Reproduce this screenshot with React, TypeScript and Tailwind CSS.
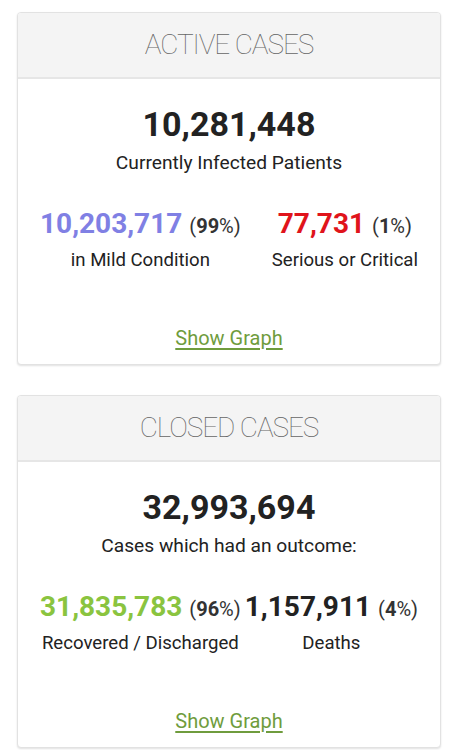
import React from "react";

type Side = { value: string; pct: string; label: string; color: string };

function Card({
  title,
  total,
  subtitle,
  left,
  right,
}: {
  title: string;
  total: string;
  subtitle: string;
  left: Side;
  right: Side;
}) {
  const side = (s: Side) => (
    <div className="flex flex-col items-center">
      <div className="flex items-baseline whitespace-nowrap">
        <span className="text-[28px] leading-[32px] font-bold" style={{ color: s.color }}>
          {s.value}
        </span>
        <span className="ml-[7px] text-[20px] leading-[32px] text-[#333]">
          (<span className="font-bold">{s.pct}</span>%)
        </span>
      </div>
      <div className="mt-[6px] text-[18.6px] leading-[24px] text-[#222]">{s.label}</div>
    </div>
  );
  return (
    <div className="ml-[17px] w-[424px] rounded-[4px] border border-[#e2e2e2] bg-white shadow-[0_1px_2px_rgba(0,0,0,0.12)] overflow-hidden">
      <div className="h-[66px] flex items-center justify-center bg-[#f4f4f4] border-b-2 border-[#e6e6e6]">
        <span className="text-[28px] font-thin text-[#666] tracking-[-1.1px]">{title}</span>
      </div>
      <div className="flex flex-col items-center pt-[25px] pb-[14px]">
        <div className="text-[34px] leading-[40px] font-bold text-[#222]">{total}</div>
        <div className="mt-[7px] text-[19.2px] leading-[24px] text-[#222]">{subtitle}</div>
        <div className="mt-[33px] w-full flex justify-between px-[22px]">
          {side(left)}
          {side(right)}
        </div>
        <div className="mt-[54px] text-[20px] leading-[24px] text-[#6f9c3d] underline underline-offset-[3px]">
          Show Graph
        </div>
      </div>
    </div>
  );
}

export default function App() {
  return (
    <div
      className="w-[453px] h-[750px] bg-white pt-[12px] flex flex-col gap-[30px]"
      style={{ fontFamily: "Roboto, 'Liberation Sans', sans-serif" }}
    >
      <Card
        title="ACTIVE CASES"
        total="10,281,448"
        subtitle="Currently Infected Patients"
        left={{ value: "10,203,717", pct: "99", label: "in Mild Condition", color: "#8080e4" }}
        right={{ value: "77,731", pct: "1", label: "Serious or Critical", color: "#e0141b" }}
      />
      <Card
        title="CLOSED CASES"
        total="32,993,694"
        subtitle="Cases which had an outcome:"
        left={{ value: "31,835,783", pct: "96", label: "Recovered / Discharged", color: "#8ac43f" }}
        right={{ value: "1,157,911", pct: "4", label: "Deaths", color: "#222" }}
      />
    </div>
  );
}
